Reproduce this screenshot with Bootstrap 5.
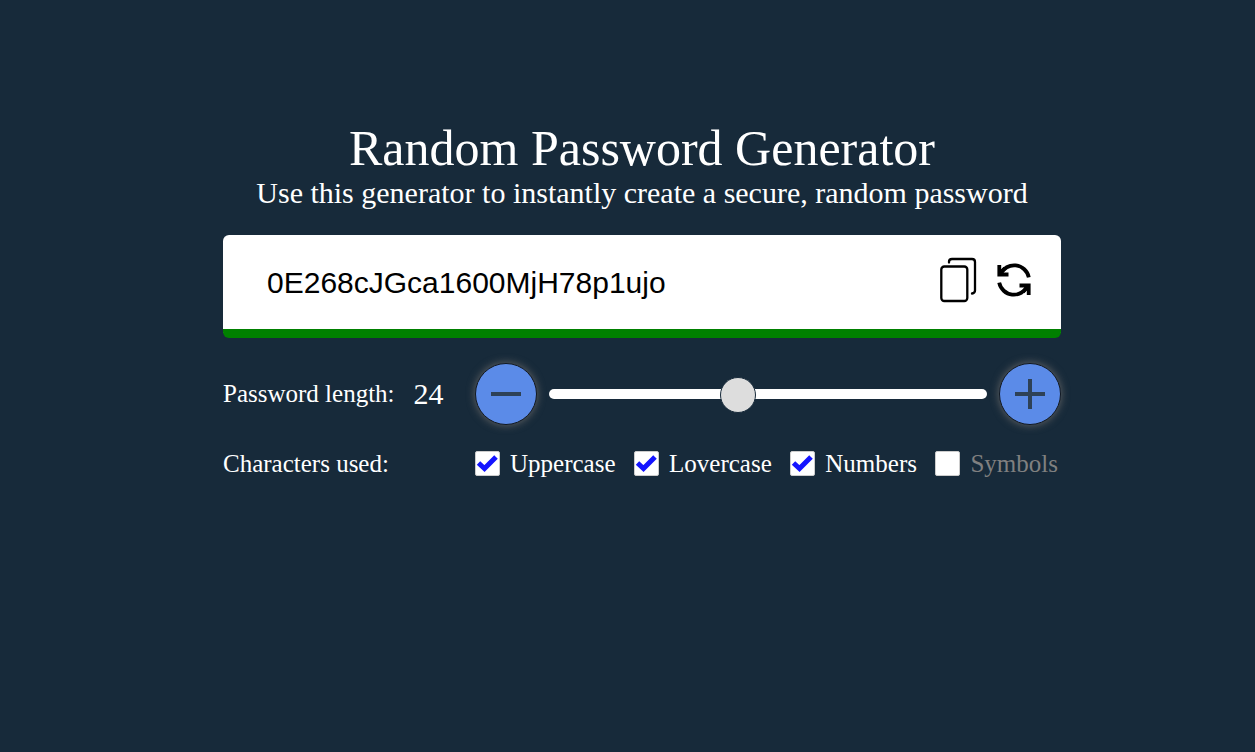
<!DOCTYPE html>
<html lang="en">
<head>
<meta charset="utf-8">
<meta name="viewport" content="width=device-width, initial-scale=1">
<title>Random Password Generator</title>
<link href="https://cdn.jsdelivr.net/npm/bootstrap@5.3.0/dist/css/bootstrap.min.css" rel="stylesheet">
<style>
  body { background: #172a3a; color: #fff; font-family: "Liberation Serif", "Times New Roman", serif; }
  .page { padding: 120px 0 48px 29px; }
  .generator { max-width: 838px; }
  .title { font-size: 50px; line-height: 56px; font-weight: 400; }
  .subtitle { font-size: 30px; line-height: 34px; }
  .output { height: 103px; margin-top: 25px; padding: 0 27px 4px 44px; background: #fff; border-bottom: 9px solid green; border-radius: 6px; }
  .password { min-width: 0; padding: 5px 0 0; font: 30px/40px "Liberation Sans", Arial, sans-serif; color: #000; }
  .password:focus { outline: 0; }
  .tool { line-height: 0; color: #000; }
  .field { font-size: 25px; line-height: 30px; }
  .lengths { margin-top: 25px; }
  .caption { width: 252px; }
  .length { font-size: 30px; margin-left: 19px; }
  .round { width: 62px; height: 62px; background: #5b8be8; border: 1px solid #111820; box-shadow: 0 0 8px #666; color: #2e4156; }
  .slider { height: 36px; min-width: 0; appearance: none; -webkit-appearance: none; background: transparent; margin: 0 12px; }
  .slider::-webkit-slider-runnable-track { height: 10px; background: #fff; border-radius: 5px; }
  .slider::-webkit-slider-thumb { -webkit-appearance: none; width: 36px; height: 36px; margin-top: -12px; border-radius: 50%; background: #ddd; border: 1px solid #172a3a; }
  .slider::-moz-range-track { height: 10px; background: #fff; border-radius: 5px; }
  .slider::-moz-range-thumb { width: 36px; height: 36px; border: 1px solid #172a3a; border-radius: 50%; background: #ddd; box-sizing: border-box; }
  .options { padding-right: 3px; }
  .option { gap: 10px; }
  .tick.form-check-input { width: 25px; height: 25px; margin: 0 0 1px; border: 1px solid #ccc; border-radius: 2px; background-color: #fff; }
  .tick.form-check-input:checked { background-color: #fff; border-color: #ccc; background-size: 23px 23px; background-image: url("data:image/svg+xml,%3Csvg xmlns='http://www.w3.org/2000/svg' viewBox='0 0 23 23'%3E%3Cpath d='M2.500 11l6 5.500 11.500-11.500' fill='none' stroke='%231414ff' stroke-width='5'/%3E%3C/svg%3E"); }
  .unused { color: #808080; }
</style>
</head>
<body>
<main class="page">
  <form class="generator mx-auto">
    <header class="text-center">
      <h1 class="title m-0">Random Password Generator</h1>
      <p class="subtitle m-0">Use this generator to instantly create a secure, random password</p>
    </header>
    <div class="output d-flex align-items-center">
      <input class="password flex-grow-1 border-0 bg-transparent" type="text" value="0E268cJGca1600MjH78p1ujo" aria-label="Password" readonly>
      <button class="tool btn border-0 p-0" type="button" aria-label="Copy password">
        <svg width="38" height="46" viewBox="0 0 38 46" fill="none" stroke="currentColor" stroke-width="2.300">
          <rect x="1.300" y="9.500" width="26" height="34.500" rx="3"/>
          <path d="M9 5.500V4.800Q9 2 12 2H32Q35 2 35 5V33.500Q35 36 32 36.500" stroke-linecap="round"/>
        </svg>
      </button>
      <button class="tool btn border-0 p-0 ms-3" type="button" aria-label="New password">
        <svg width="40" height="40" viewBox="0 0 40 40" fill="none" stroke="currentColor" stroke-width="3.800">
          <path d="M34.800 17.300A15 15 0 0 0 6.500 14M5.200 22.700A15 15 0 0 0 33.500 26"/>
          <path d="M5.300 5V14.500H14.500M34.700 35V25.500H25.500"/>
          <path d="M6 14L11 8M34 26L29 32"/>
        </svg>
      </button>
    </div>
    <div class="lengths field d-flex align-items-center">
      <div class="caption d-flex align-items-center flex-shrink-0">
        <label for="length">Password length:</label>
        <output class="length p-0" for="length">24</output>
      </div>
      <button class="round btn rounded-circle p-0 lh-1 flex-shrink-0" type="button" aria-label="Shorter">
        <svg width="30" height="30" viewBox="0 0 30 30" stroke="currentColor" stroke-width="4"><path d="M0 15H30"/></svg>
      </button>
      <input class="slider flex-grow-1" id="length" type="range" min="4" max="51" value="24">
      <button class="round btn rounded-circle p-0 lh-1 flex-shrink-0" type="button" aria-label="Longer">
        <svg width="30" height="30" viewBox="0 0 30 30" stroke="currentColor" stroke-width="4"><path d="M0 15H30M15 0V30"/></svg>
      </button>
    </div>
    <fieldset class="field d-flex align-items-center mt-4" aria-labelledby="used">
      <div class="caption flex-shrink-0" id="used">Characters used:</div>
      <div class="options d-flex flex-grow-1 justify-content-between">
        <div class="option d-flex align-items-center"><input class="tick form-check-input" type="checkbox" id="upper" checked><label for="upper">Uppercase</label></div>
        <div class="option d-flex align-items-center"><input class="tick form-check-input" type="checkbox" id="lower" checked><label for="lower">Lovercase</label></div>
        <div class="option d-flex align-items-center"><input class="tick form-check-input" type="checkbox" id="numbers" checked><label for="numbers">Numbers</label></div>
        <div class="option d-flex align-items-center"><input class="tick form-check-input" type="checkbox" id="symbols"><label class="unused" for="symbols">Symbols</label></div>
      </div>
    </fieldset>
  </form>
</main>
<script src="https://cdn.jsdelivr.net/npm/bootstrap@5.3.0/dist/js/bootstrap.bundle.min.js"></script>
</body>
</html>
